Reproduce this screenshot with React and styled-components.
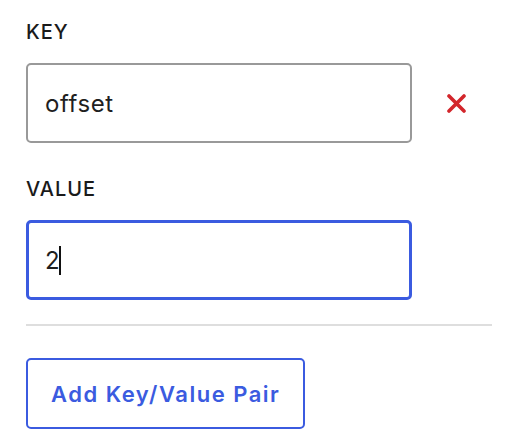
import React from "react";
import styled, { createGlobalStyle } from "styled-components";

const GlobalStyle = createGlobalStyle`
  html, body {
    margin: 0;
    padding: 0;
    background: #fff;
    font-family: Inter, "Noto Sans", sans-serif;
  }
`;

const App = () => {
  return (
    <>
      <GlobalStyle />
      <Container>
        <Label>KEY</Label>
        <Row>
          <Field>
            <Input type="text" defaultValue="offset" />
          </Field>
          <RemoveButton aria-label="Remove">
            <svg width="19" height="19" viewBox="0 0 19 19">
              <path
                d="M2 2 L17 17 M17 2 L2 17"
                stroke="#d3262b"
                strokeWidth="3.6"
                strokeLinecap="round"
              />
            </svg>
          </RemoveButton>
        </Row>
        <Label $spaced>VALUE</Label>
        <Row>
          <Field>
            <Input type="text" defaultValue="2" $active />
            <Caret />
          </Field>
        </Row>
        <Divider />
        <AddButton>Add Key/Value Pair</AddButton>
      </Container>
    </>
  );
};

const Container = styled.div`
  display: flex;
  flex-direction: column;
  align-items: flex-start;
  width: 466px;
  padding: 20px 26px;
`;

const Label = styled.label`
  display: block;
  margin-top: ${(p) => (p.$spaced ? "34px" : "0")};
  margin-bottom: 19px;
  font-size: 20px;
  line-height: 24px;
  font-weight: 500;
  letter-spacing: 1px;
  color: #1a1a1a;
`;

const Row = styled.div`
  display: flex;
  align-items: center;
  width: 100%;
`;

const Field = styled.div`
  position: relative;
  width: 386px;
`;

const Input = styled.input`
  box-sizing: border-box;
  display: block;
  width: 100%;
  height: 80px;
  margin: 0;
  border: ${(p) => (p.$active ? "3px solid #3b5be0" : "2px solid #999")};
  padding: 0 0 0 ${(p) => (p.$active ? "16px" : "17px")};
  border-radius: 5px;
  outline: none;
  font-family: Inter, "Noto Sans", sans-serif;
  font-size: 24px;
  letter-spacing: 0.6px;
  color: #1f1f1f;
  caret-color: transparent;
  background: #fff;
`;

/* text caret drawn after the "2" */
const Caret = styled.span`
  position: absolute;
  left: 33px;
  top: 26px;
  width: 2px;
  height: 29px;
  background: #111;
`;

const RemoveButton = styled.button`
  display: flex;
  align-items: center;
  justify-content: center;
  margin-left: 35px;
  padding: 0;
  border: none;
  background: none;
  cursor: pointer;
`;

const Divider = styled.hr`
  width: 100%;
  height: 2px;
  margin: 24px 0 32px;
  border: none;
  background: #dedede;
`;

const AddButton = styled.button`
  box-sizing: border-box;
  height: 71px;
  padding: 0 23px;
  border: 2px solid #3b5be0;
  border-radius: 5px;
  background: #fff;
  color: #3b5be0;
  font-family: Inter, "Noto Sans", sans-serif;
  font-size: 22px;
  font-weight: 600;
  letter-spacing: 1.5px;
  cursor: pointer;
`;

export default App;
